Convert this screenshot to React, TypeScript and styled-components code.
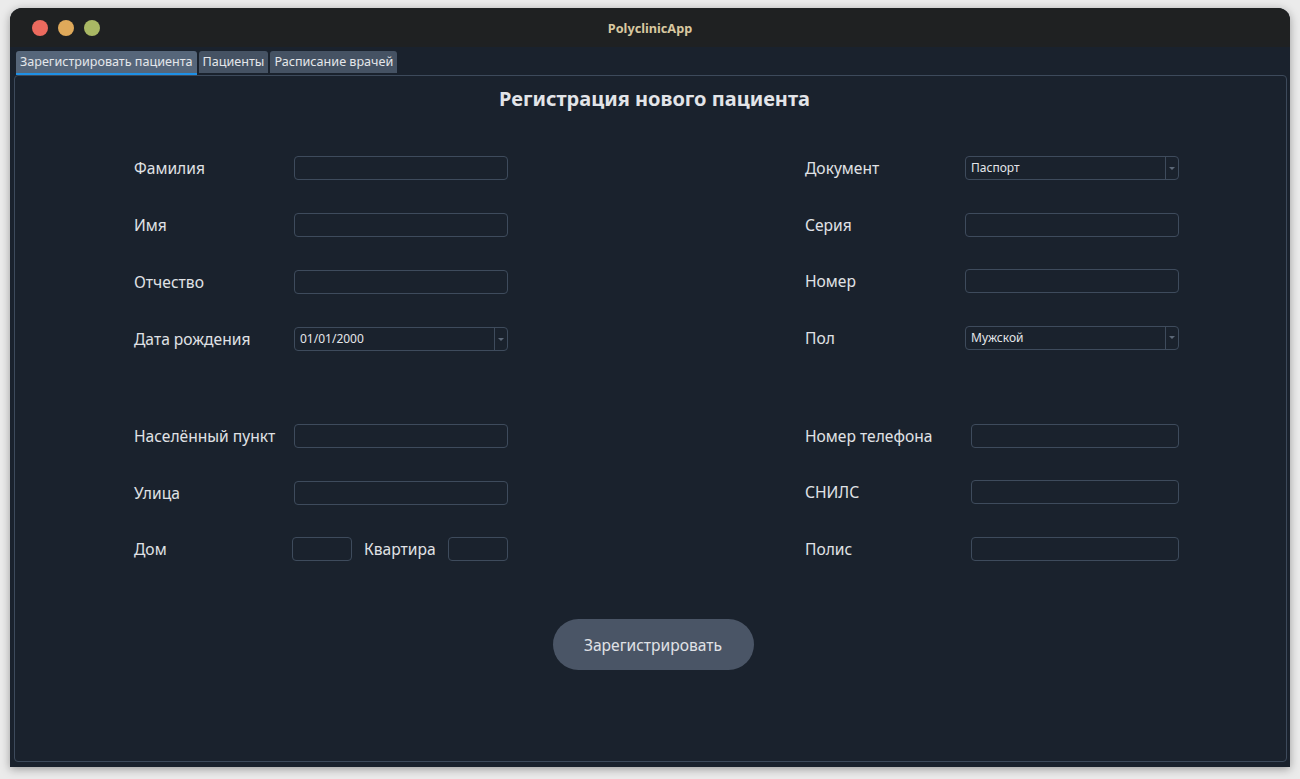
import React from "react";
import styled, { createGlobalStyle } from "styled-components";

const Global = createGlobalStyle`
  html, body { margin: 0; padding: 0; background: #ebebeb; }
  body { font-family: "Noto Sans", "DejaVu Sans", sans-serif; }
  * { box-sizing: border-box; }
`;

const Page = styled.div`
  width: 1300px;
  height: 779px;
  padding: 8px 10px 12px 10px;
`;

const Window = styled.div`
  width: 1280px;
  height: 759px;
  border-radius: 12px 12px 0 0;
  overflow: hidden;
  background: #1a222d;
  box-shadow: 0 2px 10px rgba(0, 0, 0, 0.35);
  display: flex;
  flex-direction: column;
`;

const TitleBar = styled.div`
  height: 39px;
  background: #1f2122;
  display: flex;
  align-items: center;
  position: relative;
  padding-left: 22px;
  gap: 10px;
  flex-shrink: 0;
`;

const Light = styled.span<{ $c: string }>`
  width: 16px;
  height: 16px;
  border-radius: 50%;
  background: ${(p) => p.$c};
`;

const WinTitle = styled.div`
  position: absolute;
  left: 0;
  right: 0;
  text-align: center;
  font-size: 12.7px;
  font-weight: 700;
  color: #d8c8a0;
  pointer-events: none;
`;

const Body = styled.div`
  flex: 1;
  display: flex;
  flex-direction: column;
  padding: 4px 3px 5px 4px;
`;

const Tabs = styled.div`
  display: flex;
  gap: 2px;
  padding-left: 2px;
  height: 24px;
`;

const Tab = styled.div<{ $active?: boolean }>`
  height: ${(p) => (p.$active ? 24 : 22)}px;
  padding: 0 4px;
  border-radius: 3px 3px 0 0;
  background: ${(p) => (p.$active ? "#56667a" : "#455263")};
  color: #e4e6ea;
  font-size: 12.6px;
  line-height: 22px;
  white-space: nowrap;
  border-bottom: ${(p) => (p.$active ? "2px solid #1e90e6" : "none")};
`;

const Frame = styled.div`
  flex: 1;
  border: 1px solid #3d4a5b;
  border-radius: 4px;
  display: flex;
  flex-direction: column;
  align-items: stretch;
`;

const Heading = styled.h1`
  margin: 10px 0 0 0;
  text-align: center;
  font-size: 20px;
  line-height: 26px;
  font-weight: 700;
  color: #e2e4e8;
  padding-left: 8px;
`;

const Columns = styled.div`
  display: flex;
  justify-content: space-between;
  padding: 0 107px 0 119px;
  margin-top: 44px;
`;

const Column = styled.div<{ $gap: number }>`
  width: 374px;
  display: flex;
  flex-direction: column;
  gap: ${(p) => p.$gap}px;
`;

const Group = styled.div<{ $label: number; $gap: number }>`
  display: grid;
  grid-template-columns: ${(p) => p.$label}px 1fr;
  row-gap: ${(p) => p.$gap}px;
  align-items: center;
`;

const Label = styled.label`
  font-size: 15.6px;
  line-height: 20px;
  color: #e0e2e6;
  white-space: nowrap;
`;

const Input = styled.div<{ $w?: number }>`
  height: 24px;
  width: ${(p) => (p.$w ? `${p.$w}px` : "100%")};
  border: 1px solid #3e4b5c;
  border-radius: 4px;
  background: #1a222d;
`;

const Combo = styled.div`
  height: 24px;
  width: 100%;
  border: 1px solid #3e4b5c;
  border-radius: 4px;
  background: #1a222d;
  display: flex;
  align-items: stretch;
`;

const ComboText = styled.span`
  flex: 1;
  font-size: 12px;
  line-height: 22px;
  padding-left: 5px;
  color: #e4e6ea;
`;

const ComboArrow = styled.span`
  width: 13px;
  border-left: 1px solid #3e4b5c;
  display: flex;
  align-items: center;
  justify-content: center;
  &::after {
    content: "";
    border-left: 3px solid transparent;
    border-right: 3px solid transparent;
    border-top: 3px solid #5c6878;
  }
`;

const HouseRow = styled.div`
  display: flex;
  align-items: center;
  margin-left: -2px;
`;

const HouseLabel = styled(Label)`
  margin-left: 12px;
`;

const LastInput = styled(Input)`
  margin-left: auto;
`;

const ButtonRow = styled.div`
  display: flex;
  justify-content: center;
  margin-top: 58px;
  padding-left: 5px;
`;

const Button = styled.button`
  width: 201px;
  height: 51px;
  border-radius: 26px;
  border: none;
  background: #4a5566;
  color: #e0e2e6;
  font-family: inherit;
  font-size: 15.6px;
`;

const ComboField = ({ value }: { value: string }) => (
  <Combo>
    <ComboText>{value}</ComboText>
    <ComboArrow />
  </Combo>
);

export default function App() {
  return (
    <>
      <Global />
      <Page>
        <Window>
          <TitleBar>
            <Light $c="#ec6a5e" />
            <Light $c="#dfa95a" />
            <Light $c="#a9b864" />
            <WinTitle>PolyclinicApp</WinTitle>
          </TitleBar>
          <Body>
            <Tabs>
              <Tab $active>Зарегистрировать пациента</Tab>
              <Tab>Пациенты</Tab>
              <Tab>Расписание врачей</Tab>
            </Tabs>
            <Frame>
              <Heading>Регистрация нового пациента</Heading>
              <Columns>
                <Column $gap={73}>
                  <Group $label={160} $gap={33}>
                    <Label>Фамилия</Label>
                    <Input />
                    <Label>Имя</Label>
                    <Input />
                    <Label>Отчество</Label>
                    <Input />
                    <Label>Дата рождения</Label>
                    <ComboField value="01/01/2000" />
                  </Group>
                  <Group $label={160} $gap={32.5}>
                    <Label>Населённый пункт</Label>
                    <Input />
                    <Label>Улица</Label>
                    <Input />
                    <Label>Дом</Label>
                    <HouseRow>
                      <Input $w={60} />
                      <HouseLabel>Квартира</HouseLabel>
                      <LastInput $w={60} />
                    </HouseRow>
                  </Group>
                </Column>
                <Column $gap={74}>
                  <Group $label={160} $gap={32.67}>
                    <Label>Документ</Label>
                    <ComboField value="Паспорт" />
                    <Label>Серия</Label>
                    <Input />
                    <Label>Номер</Label>
                    <Input />
                    <Label>Пол</Label>
                    <ComboField value="Мужской" />
                  </Group>
                  <Group $label={166} $gap={32.5}>
                    <Label>Номер телефона</Label>
                    <Input />
                    <Label>СНИЛС</Label>
                    <Input />
                    <Label>Полис</Label>
                    <Input />
                  </Group>
                </Column>
              </Columns>
              <ButtonRow>
                <Button>Зарегистрировать</Button>
              </ButtonRow>
            </Frame>
          </Body>
        </Window>
      </Page>
    </>
  );
}
